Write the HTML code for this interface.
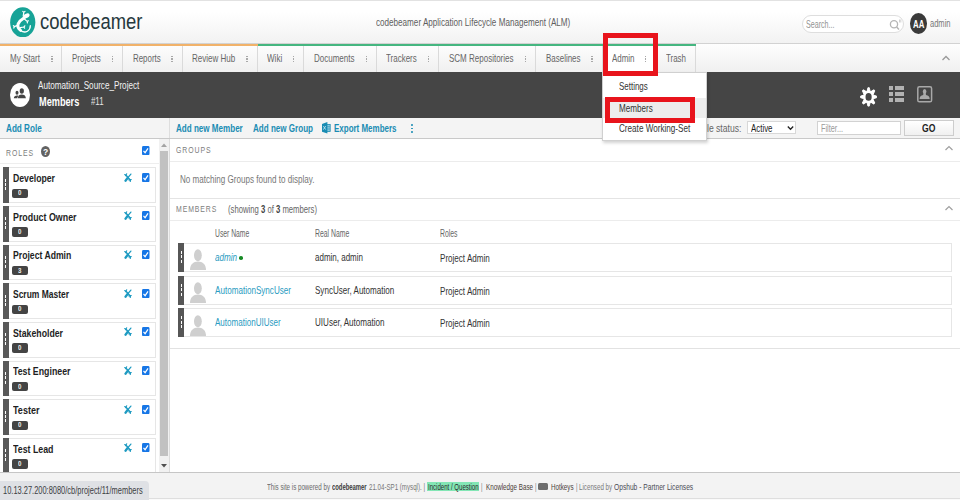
<!DOCTYPE html>
<html><head><meta charset="utf-8"><style>
html,body{margin:0;padding:0;width:960px;height:500px;overflow:hidden;background:#fff;}
body{position:relative;font-family:"Liberation Sans",sans-serif;}
body>div,body>svg{position:absolute;}
.t{white-space:nowrap;line-height:1;transform-origin:0 50%;}
.t b{font-weight:bold;}
</style></head><body>
<div style="left:0px;top:0px;width:960px;height:43px;background:linear-gradient(#fff 0,#fff 12px,#f2f2f2 43px);"></div>
<div style="left:0px;top:0px;width:960px;height:1px;background:#e2e2e2;"></div>
<div style="left:0px;top:43px;width:960px;height:1px;background:#d2d2d2;"></div>
<svg style="position:absolute;left:10px;top:6.5px" width="25.5" height="30.5" viewBox="0 0 25.5 30.5">
<ellipse cx="12.75" cy="15.25" rx="12.6" ry="15.1" fill="#17a397"/>
<g fill="#fff" stroke="#fff" stroke-linecap="round" stroke-linejoin="round">
<ellipse cx="16.4" cy="8.9" rx="3.4" ry="2.1" transform="rotate(-28 16.4 8.9)" stroke="none"/>
<path d="M14.2 10.8 C12 12.2 9.4 14 8.2 16.8 C7.4 19.2 8.2 21.6 10.6 23.4" fill="none" stroke-width="3"/>
<path d="M10.6 23.4 C12.6 25 15.2 25.4 17.4 24.2 C19.4 23 20.4 21 20.3 18.6" fill="none" stroke-width="1.3"/>
<path d="M13.2 9.2 L13.8 5.4 L12.8 4.4 M13.8 5.4 L15 4.4" fill="none" stroke-width="1.2"/>
<path d="M14.4 12 L17.2 14.4 L18.4 13.8 M17.2 14.4 L17.4 15.8" fill="none" stroke-width="1.2"/>
<path d="M8 18.2 L4.4 19.6 L3.4 18.6 M4.4 19.6 L3.8 21" fill="none" stroke-width="1.3"/>
<path d="M10.4 20.6 L13.8 20 L14.8 18.8 M13.8 20 L14.6 21.2" fill="none" stroke-width="1.2"/>
</g></svg>
<div class="t" style="left:40.00px;top:10.78px;font-size:22px;color:#26383d;transform:scaleX(0.8381);">codebeamer</div>
<div class="t" style="left:375.70px;top:17.29px;font-size:11px;color:#5e5e5e;transform:scaleX(0.7373);">codebeamer Application Lifecycle Management (ALM)</div>
<div style="left:802px;top:15px;width:101.75px;height:17.75px;border:1px solid #dedede;border-radius:9px;background:#fff;box-sizing:border-box;"></div>
<div class="t" style="left:805.80px;top:19.09px;font-size:11px;color:#939393;transform:scaleX(0.6474);">Search...</div>
<svg style="position:absolute;left:889px;top:18px" width="13" height="13" viewBox="0 0 13 13"><circle cx="5" cy="6.3" r="3.6" fill="none" stroke="#b5b5b5" stroke-width="1.3"/><path d="M7.6 9 L10 11.5" stroke="#b5b5b5" stroke-width="1.5"/><path d="M10.5 1.5v3M11.8 1.5v3" stroke="#c5c5c5" stroke-width=".8"/></svg>
<div style="left:909.5px;top:13px;width:17.5px;height:21.3px;background:#3a3a3a;border-radius:50%;"></div>
<div class="t" style="left:912.50px;top:18.99px;font-size:11px;color:#fff;font-weight:bold;transform:scaleX(0.7112);">AA</div>
<div class="t" style="left:929.80px;top:18.19px;font-size:11px;color:#777;transform:scaleX(0.6842);">admin</div>
<div style="left:0px;top:44px;width:960px;height:28px;background:linear-gradient(#fefefe,#f0f0f0);"></div>
<div style="left:0px;top:44px;width:257.5px;height:2px;background:#f1b26a;"></div>
<div style="left:257.5px;top:44px;width:438.3px;height:2px;background:#45b680;"></div>
<div style="left:602px;top:46px;width:55px;height:26px;background:#fff;"></div>
<div style="left:61px;top:46px;width:1px;height:26px;background:#dadada;"></div>
<div style="left:121.7px;top:46px;width:1px;height:26px;background:#dadada;"></div>
<div style="left:182px;top:46px;width:1px;height:26px;background:#dadada;"></div>
<div style="left:257px;top:46px;width:1px;height:26px;background:#dadada;"></div>
<div style="left:303px;top:46px;width:1px;height:26px;background:#dadada;"></div>
<div style="left:376px;top:46px;width:1px;height:26px;background:#dadada;"></div>
<div style="left:437.7px;top:46px;width:1px;height:26px;background:#dadada;"></div>
<div style="left:535px;top:46px;width:1px;height:26px;background:#dadada;"></div>
<div style="left:601.5px;top:46px;width:1px;height:26px;background:#dadada;"></div>
<div style="left:656.5px;top:46px;width:1px;height:26px;background:#dadada;"></div>
<div style="left:695.2px;top:46px;width:1px;height:26px;background:#dadada;"></div>
<div class="t" style="left:10.00px;top:53.09px;font-size:11px;color:#666;transform:scaleX(0.7326);">My Start</div>
<div style="left:51.3px;top:55.6px;width:1.4px;height:1.4px;background:#a9a9a9;"></div>
<div style="left:51.3px;top:58.3px;width:1.4px;height:1.4px;background:#a9a9a9;"></div>
<div style="left:51.3px;top:61px;width:1.4px;height:1.4px;background:#a9a9a9;"></div>
<div class="t" style="left:71.75px;top:53.09px;font-size:11px;color:#666;transform:scaleX(0.7235);">Projects</div>
<div style="left:111.8px;top:55.6px;width:1.4px;height:1.4px;background:#a9a9a9;"></div>
<div style="left:111.8px;top:58.3px;width:1.4px;height:1.4px;background:#a9a9a9;"></div>
<div style="left:111.8px;top:61px;width:1.4px;height:1.4px;background:#a9a9a9;"></div>
<div class="t" style="left:132.50px;top:53.09px;font-size:11px;color:#666;transform:scaleX(0.7192);">Reports</div>
<div style="left:171.3px;top:55.6px;width:1.4px;height:1.4px;background:#a9a9a9;"></div>
<div style="left:171.3px;top:58.3px;width:1.4px;height:1.4px;background:#a9a9a9;"></div>
<div style="left:171.3px;top:61px;width:1.4px;height:1.4px;background:#a9a9a9;"></div>
<div class="t" style="left:191.75px;top:53.09px;font-size:11px;color:#666;transform:scaleX(0.7293);">Review Hub</div>
<div style="left:246.3px;top:55.6px;width:1.4px;height:1.4px;background:#a9a9a9;"></div>
<div style="left:246.3px;top:58.3px;width:1.4px;height:1.4px;background:#a9a9a9;"></div>
<div style="left:246.3px;top:61px;width:1.4px;height:1.4px;background:#a9a9a9;"></div>
<div class="t" style="left:266.75px;top:53.09px;font-size:11px;color:#666;transform:scaleX(0.7342);">Wiki</div>
<div style="left:292.55px;top:55.6px;width:1.4px;height:1.4px;background:#a9a9a9;"></div>
<div style="left:292.55px;top:58.3px;width:1.4px;height:1.4px;background:#a9a9a9;"></div>
<div style="left:292.55px;top:61px;width:1.4px;height:1.4px;background:#a9a9a9;"></div>
<div class="t" style="left:313.75px;top:53.09px;font-size:11px;color:#666;transform:scaleX(0.7280);">Documents</div>
<div style="left:365.55px;top:55.6px;width:1.4px;height:1.4px;background:#a9a9a9;"></div>
<div style="left:365.55px;top:58.3px;width:1.4px;height:1.4px;background:#a9a9a9;"></div>
<div style="left:365.55px;top:61px;width:1.4px;height:1.4px;background:#a9a9a9;"></div>
<div class="t" style="left:386.25px;top:53.09px;font-size:11px;color:#666;transform:scaleX(0.7257);">Trackers</div>
<div style="left:427.55px;top:55.6px;width:1.4px;height:1.4px;background:#a9a9a9;"></div>
<div style="left:427.55px;top:58.3px;width:1.4px;height:1.4px;background:#a9a9a9;"></div>
<div style="left:427.55px;top:61px;width:1.4px;height:1.4px;background:#a9a9a9;"></div>
<div class="t" style="left:448.75px;top:53.09px;font-size:11px;color:#666;transform:scaleX(0.7276);">SCM Repositories</div>
<div style="left:524.8px;top:55.6px;width:1.4px;height:1.4px;background:#a9a9a9;"></div>
<div style="left:524.8px;top:58.3px;width:1.4px;height:1.4px;background:#a9a9a9;"></div>
<div style="left:524.8px;top:61px;width:1.4px;height:1.4px;background:#a9a9a9;"></div>
<div class="t" style="left:545.50px;top:53.09px;font-size:11px;color:#666;transform:scaleX(0.7233);">Baselines</div>
<div style="left:591.3px;top:55.6px;width:1.4px;height:1.4px;background:#a9a9a9;"></div>
<div style="left:591.3px;top:58.3px;width:1.4px;height:1.4px;background:#a9a9a9;"></div>
<div style="left:591.3px;top:61px;width:1.4px;height:1.4px;background:#a9a9a9;"></div>
<div class="t" style="left:611.75px;top:53.09px;font-size:11px;color:#666;transform:scaleX(0.7216);">Admin</div>
<div style="left:645.05px;top:55.6px;width:1.4px;height:1.4px;background:#a9a9a9;"></div>
<div style="left:645.05px;top:58.3px;width:1.4px;height:1.4px;background:#a9a9a9;"></div>
<div style="left:645.05px;top:61px;width:1.4px;height:1.4px;background:#a9a9a9;"></div>
<div class="t" style="left:666.25px;top:53.09px;font-size:11px;color:#666;transform:scaleX(0.7217);">Trash</div>
<svg style="position:absolute;left:941px;top:54px" width="10" height="8" viewBox="0 0 10 8"><path d="M1.5 6 L5 2.5 L8.5 6" fill="none" stroke="#9a9a9a" stroke-width="1.3"/></svg>
<div style="left:0px;top:72px;width:960px;height:45.5px;background:#454545;"></div>
<div style="left:9.9px;top:82.8px;width:20px;height:24.1px;background:#fff;border-radius:50%;"></div>
<svg style="position:absolute;left:13px;top:88px" width="14" height="11" viewBox="0 0 14 11"><g fill="#454545">
<ellipse cx="8.8" cy="3" rx="2.1" ry="2.8"/><path d="M4.8 10.2 C5 7.6 6.6 6.6 8.8 6.6 C11 6.6 12.6 7.6 12.9 10.2Z"/>
<ellipse cx="4" cy="4.8" rx="1.5" ry="2"/><path d="M0.8 10.2 C1 8.2 2.2 7.4 4 7.4 C4.6 7.4 5 7.5 5.4 7.7 C4.7 8.4 4.4 9.2 4.3 10.2Z"/></g></svg>
<div class="t" style="left:38.10px;top:79.69px;font-size:11px;color:#f2f2f2;transform:scaleX(0.7396);">Automation_Source_Project</div>
<div class="t" style="left:38.50px;top:95.54px;font-size:12px;color:#fff;font-weight:bold;transform:scaleX(0.7649);">Members</div>
<div class="t" style="left:90.60px;top:96.39px;font-size:11px;color:#e6e6e6;transform:scaleX(0.7128);">#11</div>
<svg style="position:absolute;left:860px;top:86.9px" width="17.2" height="19.8" viewBox="-10 -10 20 20" preserveAspectRatio="none"><g fill="#fff" stroke="#fff" stroke-width="1" stroke-linejoin="round"><circle r="6.5" stroke="none"/><path d="M-1.7 -6 L-0.8 -9.3 L0.8 -9.3 L1.7 -6Z" transform="rotate(0)"/><path d="M-1.7 -6 L-0.8 -9.3 L0.8 -9.3 L1.7 -6Z" transform="rotate(45)"/><path d="M-1.7 -6 L-0.8 -9.3 L0.8 -9.3 L1.7 -6Z" transform="rotate(90)"/><path d="M-1.7 -6 L-0.8 -9.3 L0.8 -9.3 L1.7 -6Z" transform="rotate(135)"/><path d="M-1.7 -6 L-0.8 -9.3 L0.8 -9.3 L1.7 -6Z" transform="rotate(180)"/><path d="M-1.7 -6 L-0.8 -9.3 L0.8 -9.3 L1.7 -6Z" transform="rotate(225)"/><path d="M-1.7 -6 L-0.8 -9.3 L0.8 -9.3 L1.7 -6Z" transform="rotate(270)"/><path d="M-1.7 -6 L-0.8 -9.3 L0.8 -9.3 L1.7 -6Z" transform="rotate(315)"/></g><ellipse rx="3.6" ry="3.9" fill="#454545"/></svg>
<div style="left:888.9px;top:86px;width:4.2px;height:4.2px;background:#b2b2b2;"></div>
<div style="left:895px;top:86px;width:9.2px;height:4.2px;background:#b2b2b2;"></div>
<div style="left:888.9px;top:91.9px;width:4.2px;height:4.2px;background:#b2b2b2;"></div>
<div style="left:895px;top:91.9px;width:9.2px;height:4.2px;background:#b2b2b2;"></div>
<div style="left:888.9px;top:97.9px;width:4.2px;height:4.2px;background:#b2b2b2;"></div>
<div style="left:895px;top:97.9px;width:9.2px;height:4.2px;background:#b2b2b2;"></div>
<svg style="position:absolute;left:917.3px;top:86px" width="15.4" height="16.6" viewBox="0 0 15.4 16.6"><rect x=".8" y=".8" width="13.8" height="15" rx="1.6" fill="none" stroke="#a9a9a9" stroke-width="1.5"/>
<ellipse cx="7.6" cy="5.6" rx="1.8" ry="2.6" fill="#a9a9a9"/><path d="M6.4 7.6 L6.2 9 C3.8 9.4 2.6 10.8 2.6 13.1 L12.7 13.1 C12.7 10.8 11.4 9.4 9 9 L8.8 7.6Z" fill="#a9a9a9"/></svg>
<div style="left:0px;top:117.5px;width:960px;height:21px;background:#f4f4f4;"></div>
<div style="left:0px;top:138px;width:960px;height:1px;background:#c9c9c9;"></div>
<div style="left:169px;top:117.5px;width:1px;height:20.5px;background:#dedede;"></div>
<div class="t" style="left:6.25px;top:123.39px;font-size:11px;color:#1a8cb3;font-weight:bold;transform:scaleX(0.7405);">Add Role</div>
<div class="t" style="left:175.75px;top:123.39px;font-size:11px;color:#1a8cb3;font-weight:bold;transform:scaleX(0.7330);">Add new Member</div>
<div class="t" style="left:252.50px;top:123.39px;font-size:11px;color:#1a8cb3;font-weight:bold;transform:scaleX(0.7328);">Add new Group</div>
<svg style="position:absolute;left:322.3px;top:122.2px" width="8.6" height="11.6" viewBox="0 0 8.6 11.6"><rect x="4.6" y="2.4" width="3.6" height="7" fill="#8fcbe0" stroke="#1a8cb3" stroke-width=".8"/><path d="M5.2 4.7h2.6M5.2 7h2.6" stroke="#1a8cb3" stroke-width=".6"/><path d="M0 1.9 L5.4 0 L5.4 11.6 L0 9.7Z" fill="#1a8cb3"/><path d="M1.4 4.1 L3.7 7.6 M3.7 4.1 L1.4 7.6" stroke="#bfe3ef" stroke-width=".9"/></svg>
<div class="t" style="left:333.75px;top:123.39px;font-size:11px;color:#1a8cb3;font-weight:bold;transform:scaleX(0.7251);">Export Members</div>
<div style="left:410.9px;top:123.8px;width:1.8px;height:1.8px;background:#1a8cb3;border-radius:50%;"></div>
<div style="left:410.9px;top:127.6px;width:1.8px;height:1.8px;background:#1a8cb3;border-radius:50%;"></div>
<div style="left:410.9px;top:131.4px;width:1.8px;height:1.8px;background:#1a8cb3;border-radius:50%;"></div>
<div class="t" style="left:696.30px;top:122.59px;font-size:11px;color:#666;transform:scaleX(0.7816);">Role status:</div>
<div style="left:747.4px;top:121.3px;width:48.2px;height:13.2px;background:#fff;border:1px solid #d8d8d8;box-sizing:border-box;"></div>
<div class="t" style="left:750.50px;top:122.69px;font-size:11px;color:#222;transform:scaleX(0.7177);">Active</div>
<svg style="position:absolute;left:786.5px;top:125px" width="7" height="6" viewBox="0 0 7 6"><path d="M.8 1.5 L3.5 4.3 L6.2 1.5" fill="none" stroke="#222" stroke-width="1.3"/></svg>
<div style="left:817.4px;top:121.2px;width:84.1px;height:14.1px;background:#fff;border:1px solid #d2d2d2;box-sizing:border-box;"></div>
<div class="t" style="left:820.80px;top:122.69px;font-size:11px;color:#9a9a9a;transform:scaleX(0.6665);">Filter...</div>
<div style="left:904px;top:120.4px;width:49.5px;height:15.5px;background:linear-gradient(#fff,#f0f0f0);border:1px solid #cdcdcd;box-sizing:border-box;"></div>
<div class="t" style="left:921.80px;top:123.09px;font-size:11px;color:#222;font-weight:bold;transform:scaleX(0.7831);">GO</div>
<div style="left:0px;top:139px;width:159px;height:333px;background:#fff;"></div>
<div class="t" style="left:6.25px;top:148.88px;font-size:9px;color:#7d7d7d;letter-spacing:1.2px;transform:scaleX(0.7669);">ROLES</div>
<div style="left:40.6px;top:145.9px;width:9.7px;height:11.6px;background:#626262;border-radius:50%;"></div>
<div class="t" style="left:42.90px;top:147.58px;font-size:9px;color:#fff;font-weight:bold;transform:scaleX(0.9458);">?</div>
<svg style="position:absolute;left:142px;top:146px" width="7.5" height="9.2" viewBox="0 0 7.5 9.2"><rect width="7.5" height="9.2" rx="1.4" fill="#1676e6"/><path d="M1.5 4.8 L3.1 6.7 L6 2.3" fill="none" stroke="#fff" stroke-width="1.2"/></svg>
<div style="left:0px;top:163px;width:158.5px;height:1.2px;background:#eeeeee;"></div>
<div style="left:3px;top:167.4px;width:152.5px;height:35.6px;border:1px solid #e6e6e6;box-sizing:border-box;background:#fff;"></div>
<div style="left:3px;top:167.4px;width:5.6px;height:35.6px;background:#595959;"></div>
<div style="left:5px;top:178.6px;width:1.4px;height:3.1px;background:#fff;"></div>
<div style="left:5px;top:183.0px;width:1.4px;height:3.1px;background:#fff;"></div>
<div style="left:5px;top:187.4px;width:1.4px;height:3.1px;background:#fff;"></div>
<div class="t" style="left:12.50px;top:172.97px;font-size:11.5px;color:#1e1e1e;font-weight:bold;transform:scaleX(0.7553);">Developer</div>
<div style="left:12px;top:188.6px;width:15.8px;height:9.4px;background:#444;border-radius:2px;"></div>
<div class="t" style="left:18.40px;top:190.40px;font-size:6.5px;color:#eee;font-weight:bold;transform:scaleX(0.9405);">0</div>
<svg style="position:absolute;left:124.2px;top:172.60px" width="8.2" height="9" viewBox="0 0 8.2 9"><g stroke="#1f9bc2" fill="none" stroke-linecap="round"><path d="M6.9 1.1 L3.9 4.6" stroke-width="1.3"/><path d="M3.8 4.8 L1.5 7.7" stroke-width="2.3"/><path d="M1.8 2 L6.4 7.2" stroke-width="1.5"/><path d="M0.7 1.5 L1.7 2.6 L2.7 0.7" stroke-width="1.1"/><path d="M4.9 6.9 L7.3 6.5 M6.3 8.4 L6.5 6.7" stroke-width="1.2"/></g></svg>
<svg style="position:absolute;left:142px;top:172.6px" width="7.5" height="9.2" viewBox="0 0 7.5 9.2"><rect width="7.5" height="9.2" rx="1.4" fill="#1676e6"/><path d="M1.5 4.8 L3.1 6.7 L6 2.3" fill="none" stroke="#fff" stroke-width="1.2"/></svg>
<div style="left:3px;top:206.06px;width:152.5px;height:35.6px;border:1px solid #e6e6e6;box-sizing:border-box;background:#fff;"></div>
<div style="left:3px;top:206.06px;width:5.6px;height:35.6px;background:#595959;"></div>
<div style="left:5px;top:217.26px;width:1.4px;height:3.1px;background:#fff;"></div>
<div style="left:5px;top:221.66px;width:1.4px;height:3.1px;background:#fff;"></div>
<div style="left:5px;top:226.06px;width:1.4px;height:3.1px;background:#fff;"></div>
<div class="t" style="left:12.50px;top:211.63px;font-size:11.5px;color:#1e1e1e;font-weight:bold;transform:scaleX(0.7704);">Product Owner</div>
<div style="left:12px;top:227.26px;width:15.8px;height:9.4px;background:#444;border-radius:2px;"></div>
<div class="t" style="left:18.40px;top:229.06px;font-size:6.5px;color:#eee;font-weight:bold;transform:scaleX(0.9405);">0</div>
<svg style="position:absolute;left:124.2px;top:211.26px" width="8.2" height="9" viewBox="0 0 8.2 9"><g stroke="#1f9bc2" fill="none" stroke-linecap="round"><path d="M6.9 1.1 L3.9 4.6" stroke-width="1.3"/><path d="M3.8 4.8 L1.5 7.7" stroke-width="2.3"/><path d="M1.8 2 L6.4 7.2" stroke-width="1.5"/><path d="M0.7 1.5 L1.7 2.6 L2.7 0.7" stroke-width="1.1"/><path d="M4.9 6.9 L7.3 6.5 M6.3 8.4 L6.5 6.7" stroke-width="1.2"/></g></svg>
<svg style="position:absolute;left:142px;top:211.26px" width="7.5" height="9.2" viewBox="0 0 7.5 9.2"><rect width="7.5" height="9.2" rx="1.4" fill="#1676e6"/><path d="M1.5 4.8 L3.1 6.7 L6 2.3" fill="none" stroke="#fff" stroke-width="1.2"/></svg>
<div style="left:3px;top:244.72px;width:152.5px;height:35.6px;border:1px solid #e6e6e6;box-sizing:border-box;background:#fff;"></div>
<div style="left:3px;top:244.72px;width:5.6px;height:35.6px;background:#595959;"></div>
<div style="left:5px;top:255.92px;width:1.4px;height:3.1px;background:#fff;"></div>
<div style="left:5px;top:260.32px;width:1.4px;height:3.1px;background:#fff;"></div>
<div style="left:5px;top:264.72px;width:1.4px;height:3.1px;background:#fff;"></div>
<div class="t" style="left:12.50px;top:250.29px;font-size:11.5px;color:#1e1e1e;font-weight:bold;transform:scaleX(0.7520);">Project Admin</div>
<div style="left:12px;top:265.92px;width:15.8px;height:9.4px;background:#444;border-radius:2px;"></div>
<div class="t" style="left:18.40px;top:267.72px;font-size:6.5px;color:#eee;font-weight:bold;transform:scaleX(0.9405);">3</div>
<svg style="position:absolute;left:124.2px;top:249.92px" width="8.2" height="9" viewBox="0 0 8.2 9"><g stroke="#1f9bc2" fill="none" stroke-linecap="round"><path d="M6.9 1.1 L3.9 4.6" stroke-width="1.3"/><path d="M3.8 4.8 L1.5 7.7" stroke-width="2.3"/><path d="M1.8 2 L6.4 7.2" stroke-width="1.5"/><path d="M0.7 1.5 L1.7 2.6 L2.7 0.7" stroke-width="1.1"/><path d="M4.9 6.9 L7.3 6.5 M6.3 8.4 L6.5 6.7" stroke-width="1.2"/></g></svg>
<svg style="position:absolute;left:142px;top:249.92px" width="7.5" height="9.2" viewBox="0 0 7.5 9.2"><rect width="7.5" height="9.2" rx="1.4" fill="#1676e6"/><path d="M1.5 4.8 L3.1 6.7 L6 2.3" fill="none" stroke="#fff" stroke-width="1.2"/></svg>
<div style="left:3px;top:283.38px;width:152.5px;height:35.6px;border:1px solid #e6e6e6;box-sizing:border-box;background:#fff;"></div>
<div style="left:3px;top:283.38px;width:5.6px;height:35.6px;background:#595959;"></div>
<div style="left:5px;top:294.58px;width:1.4px;height:3.1px;background:#fff;"></div>
<div style="left:5px;top:298.98px;width:1.4px;height:3.1px;background:#fff;"></div>
<div style="left:5px;top:303.38px;width:1.4px;height:3.1px;background:#fff;"></div>
<div class="t" style="left:12.50px;top:288.95px;font-size:11.5px;color:#1e1e1e;font-weight:bold;transform:scaleX(0.7363);">Scrum Master</div>
<div style="left:12px;top:304.58px;width:15.8px;height:9.4px;background:#444;border-radius:2px;"></div>
<div class="t" style="left:18.40px;top:306.38px;font-size:6.5px;color:#eee;font-weight:bold;transform:scaleX(0.9405);">0</div>
<svg style="position:absolute;left:124.2px;top:288.58px" width="8.2" height="9" viewBox="0 0 8.2 9"><g stroke="#1f9bc2" fill="none" stroke-linecap="round"><path d="M6.9 1.1 L3.9 4.6" stroke-width="1.3"/><path d="M3.8 4.8 L1.5 7.7" stroke-width="2.3"/><path d="M1.8 2 L6.4 7.2" stroke-width="1.5"/><path d="M0.7 1.5 L1.7 2.6 L2.7 0.7" stroke-width="1.1"/><path d="M4.9 6.9 L7.3 6.5 M6.3 8.4 L6.5 6.7" stroke-width="1.2"/></g></svg>
<svg style="position:absolute;left:142px;top:288.58px" width="7.5" height="9.2" viewBox="0 0 7.5 9.2"><rect width="7.5" height="9.2" rx="1.4" fill="#1676e6"/><path d="M1.5 4.8 L3.1 6.7 L6 2.3" fill="none" stroke="#fff" stroke-width="1.2"/></svg>
<div style="left:3px;top:322.03999999999996px;width:152.5px;height:35.6px;border:1px solid #e6e6e6;box-sizing:border-box;background:#fff;"></div>
<div style="left:3px;top:322.03999999999996px;width:5.6px;height:35.6px;background:#595959;"></div>
<div style="left:5px;top:333.23999999999995px;width:1.4px;height:3.1px;background:#fff;"></div>
<div style="left:5px;top:337.64px;width:1.4px;height:3.1px;background:#fff;"></div>
<div style="left:5px;top:342.03999999999996px;width:1.4px;height:3.1px;background:#fff;"></div>
<div class="t" style="left:12.50px;top:327.61px;font-size:11.5px;color:#1e1e1e;font-weight:bold;transform:scaleX(0.7595);">Stakeholder</div>
<div style="left:12px;top:343.23999999999995px;width:15.8px;height:9.4px;background:#444;border-radius:2px;"></div>
<div class="t" style="left:18.40px;top:345.04px;font-size:6.5px;color:#eee;font-weight:bold;transform:scaleX(0.9405);">0</div>
<svg style="position:absolute;left:124.2px;top:327.24px" width="8.2" height="9" viewBox="0 0 8.2 9"><g stroke="#1f9bc2" fill="none" stroke-linecap="round"><path d="M6.9 1.1 L3.9 4.6" stroke-width="1.3"/><path d="M3.8 4.8 L1.5 7.7" stroke-width="2.3"/><path d="M1.8 2 L6.4 7.2" stroke-width="1.5"/><path d="M0.7 1.5 L1.7 2.6 L2.7 0.7" stroke-width="1.1"/><path d="M4.9 6.9 L7.3 6.5 M6.3 8.4 L6.5 6.7" stroke-width="1.2"/></g></svg>
<svg style="position:absolute;left:142px;top:327.24px" width="7.5" height="9.2" viewBox="0 0 7.5 9.2"><rect width="7.5" height="9.2" rx="1.4" fill="#1676e6"/><path d="M1.5 4.8 L3.1 6.7 L6 2.3" fill="none" stroke="#fff" stroke-width="1.2"/></svg>
<div style="left:3px;top:360.7px;width:152.5px;height:35.6px;border:1px solid #e6e6e6;box-sizing:border-box;background:#fff;"></div>
<div style="left:3px;top:360.7px;width:5.6px;height:35.6px;background:#595959;"></div>
<div style="left:5px;top:371.9px;width:1.4px;height:3.1px;background:#fff;"></div>
<div style="left:5px;top:376.3px;width:1.4px;height:3.1px;background:#fff;"></div>
<div style="left:5px;top:380.7px;width:1.4px;height:3.1px;background:#fff;"></div>
<div class="t" style="left:12.50px;top:366.27px;font-size:11.5px;color:#1e1e1e;font-weight:bold;transform:scaleX(0.7647);">Test Engineer</div>
<div style="left:12px;top:381.9px;width:15.8px;height:9.4px;background:#444;border-radius:2px;"></div>
<div class="t" style="left:18.40px;top:383.70px;font-size:6.5px;color:#eee;font-weight:bold;transform:scaleX(0.9405);">0</div>
<svg style="position:absolute;left:124.2px;top:365.90px" width="8.2" height="9" viewBox="0 0 8.2 9"><g stroke="#1f9bc2" fill="none" stroke-linecap="round"><path d="M6.9 1.1 L3.9 4.6" stroke-width="1.3"/><path d="M3.8 4.8 L1.5 7.7" stroke-width="2.3"/><path d="M1.8 2 L6.4 7.2" stroke-width="1.5"/><path d="M0.7 1.5 L1.7 2.6 L2.7 0.7" stroke-width="1.1"/><path d="M4.9 6.9 L7.3 6.5 M6.3 8.4 L6.5 6.7" stroke-width="1.2"/></g></svg>
<svg style="position:absolute;left:142px;top:365.9px" width="7.5" height="9.2" viewBox="0 0 7.5 9.2"><rect width="7.5" height="9.2" rx="1.4" fill="#1676e6"/><path d="M1.5 4.8 L3.1 6.7 L6 2.3" fill="none" stroke="#fff" stroke-width="1.2"/></svg>
<div style="left:3px;top:399.36px;width:152.5px;height:35.6px;border:1px solid #e6e6e6;box-sizing:border-box;background:#fff;"></div>
<div style="left:3px;top:399.36px;width:5.6px;height:35.6px;background:#595959;"></div>
<div style="left:5px;top:410.56px;width:1.4px;height:3.1px;background:#fff;"></div>
<div style="left:5px;top:414.96000000000004px;width:1.4px;height:3.1px;background:#fff;"></div>
<div style="left:5px;top:419.36px;width:1.4px;height:3.1px;background:#fff;"></div>
<div class="t" style="left:12.50px;top:404.93px;font-size:11.5px;color:#1e1e1e;font-weight:bold;transform:scaleX(0.7872);">Tester</div>
<div style="left:12px;top:420.56px;width:15.8px;height:9.4px;background:#444;border-radius:2px;"></div>
<div class="t" style="left:18.40px;top:422.36px;font-size:6.5px;color:#eee;font-weight:bold;transform:scaleX(0.9405);">0</div>
<svg style="position:absolute;left:124.2px;top:404.56px" width="8.2" height="9" viewBox="0 0 8.2 9"><g stroke="#1f9bc2" fill="none" stroke-linecap="round"><path d="M6.9 1.1 L3.9 4.6" stroke-width="1.3"/><path d="M3.8 4.8 L1.5 7.7" stroke-width="2.3"/><path d="M1.8 2 L6.4 7.2" stroke-width="1.5"/><path d="M0.7 1.5 L1.7 2.6 L2.7 0.7" stroke-width="1.1"/><path d="M4.9 6.9 L7.3 6.5 M6.3 8.4 L6.5 6.7" stroke-width="1.2"/></g></svg>
<svg style="position:absolute;left:142px;top:404.56px" width="7.5" height="9.2" viewBox="0 0 7.5 9.2"><rect width="7.5" height="9.2" rx="1.4" fill="#1676e6"/><path d="M1.5 4.8 L3.1 6.7 L6 2.3" fill="none" stroke="#fff" stroke-width="1.2"/></svg>
<div style="left:3px;top:438.02px;width:152.5px;height:35.6px;border:1px solid #e6e6e6;box-sizing:border-box;background:#fff;"></div>
<div style="left:3px;top:438.02px;width:5.6px;height:35.6px;background:#595959;"></div>
<div style="left:5px;top:449.21999999999997px;width:1.4px;height:3.1px;background:#fff;"></div>
<div style="left:5px;top:453.62px;width:1.4px;height:3.1px;background:#fff;"></div>
<div style="left:5px;top:458.02px;width:1.4px;height:3.1px;background:#fff;"></div>
<div class="t" style="left:12.50px;top:443.59px;font-size:11.5px;color:#1e1e1e;font-weight:bold;transform:scaleX(0.7666);">Test Lead</div>
<div style="left:12px;top:459.21999999999997px;width:15.8px;height:9.4px;background:#444;border-radius:2px;"></div>
<div class="t" style="left:18.40px;top:461.02px;font-size:6.5px;color:#eee;font-weight:bold;transform:scaleX(0.9405);">0</div>
<svg style="position:absolute;left:124.2px;top:443.22px" width="8.2" height="9" viewBox="0 0 8.2 9"><g stroke="#1f9bc2" fill="none" stroke-linecap="round"><path d="M6.9 1.1 L3.9 4.6" stroke-width="1.3"/><path d="M3.8 4.8 L1.5 7.7" stroke-width="2.3"/><path d="M1.8 2 L6.4 7.2" stroke-width="1.5"/><path d="M0.7 1.5 L1.7 2.6 L2.7 0.7" stroke-width="1.1"/><path d="M4.9 6.9 L7.3 6.5 M6.3 8.4 L6.5 6.7" stroke-width="1.2"/></g></svg>
<svg style="position:absolute;left:142px;top:443.22px" width="7.5" height="9.2" viewBox="0 0 7.5 9.2"><rect width="7.5" height="9.2" rx="1.4" fill="#1676e6"/><path d="M1.5 4.8 L3.1 6.7 L6 2.3" fill="none" stroke="#fff" stroke-width="1.2"/></svg>
<div style="left:158.5px;top:139px;width:10.5px;height:333px;background:#f1f1f1;"></div>
<div style="left:159.8px;top:151.2px;width:7.8px;height:305px;background:#c1c1c1;"></div>
<svg style="position:absolute;left:160px;top:142px" width="8" height="6" viewBox="0 0 8 6"><path d="M1 5 L4 1.5 L7 5Z" fill="#a3a3a3"/></svg>
<svg style="position:absolute;left:160px;top:462.5px" width="8" height="6" viewBox="0 0 8 6"><path d="M1 1 L4 4.5 L7 1Z" fill="#505050"/></svg>
<div style="left:169px;top:139px;width:1px;height:333px;background:#dcdcdc;"></div>
<div class="t" style="left:175.75px;top:145.58px;font-size:9px;color:#7d7d7d;letter-spacing:1.2px;transform:scaleX(0.7683);">GROUPS</div>
<svg style="position:absolute;left:944px;top:144px" width="10" height="8" viewBox="0 0 10 8"><path d="M1.5 6 L5 2.5 L8.5 6" fill="none" stroke="#a0a0a0" stroke-width="1.2"/></svg>
<div style="left:170px;top:160.5px;width:790px;height:1px;background:#ececec;"></div>
<div class="t" style="left:180.00px;top:174.29px;font-size:11px;color:#777;transform:scaleX(0.7340);">No matching Groups found to display.</div>
<div style="left:170px;top:198px;width:790px;height:1px;background:#e4e4e4;"></div>
<div class="t" style="left:175.75px;top:205.18px;font-size:9px;color:#7d7d7d;letter-spacing:1.2px;transform:scaleX(0.7643);">MEMBERS</div>
<div class="t" style="left:228px;top:204.5px;font-size:10px;color:#666;transform:scaleX(.77);">(showing <b style="color:#444">3</b> of <b style="color:#444">3</b> members)</div>
<svg style="position:absolute;left:944px;top:204px" width="10" height="8" viewBox="0 0 10 8"><path d="M1.5 6 L5 2.5 L8.5 6" fill="none" stroke="#a0a0a0" stroke-width="1.2"/></svg>
<div style="left:170px;top:219.8px;width:790px;height:1px;background:#ececec;"></div>
<div class="t" style="left:214.50px;top:228.73px;font-size:10px;color:#666;transform:scaleX(0.6773);">User Name</div>
<div class="t" style="left:315.00px;top:228.73px;font-size:10px;color:#666;transform:scaleX(0.6847);">Real Name</div>
<div class="t" style="left:439.50px;top:228.73px;font-size:10px;color:#666;transform:scaleX(0.6845);">Roles</div>
<div style="left:178.25px;top:242.5px;width:773.25px;height:29px;border:1px solid #e6e6e6;box-sizing:border-box;background:#fff;"></div>
<div style="left:178.25px;top:242.5px;width:6.2px;height:29px;background:#565656;"></div>
<div style="left:180.7px;top:250.8px;width:1.4px;height:3.1px;background:#fff;"></div>
<div style="left:180.7px;top:255.2px;width:1.4px;height:3.1px;background:#fff;"></div>
<div style="left:180.7px;top:259.6px;width:1.4px;height:3.1px;background:#fff;"></div>
<svg style="position:absolute;left:189.9px;top:249.20px" width="16" height="21" viewBox="0 0 16 21"><ellipse cx="7.9" cy="6.2" rx="3.9" ry="6" fill="#cfcfcf"/><path d="M0 21 C0 15.6 3.4 12.6 8 12.6 C12.6 12.6 16 15.6 16 21 Z" fill="#cfcfcf"/></svg>
<div class="t" style="left:214.70px;top:252.19px;font-size:11px;color:#2a9bc1;font-style:italic;transform:scaleX(0.7376);">admin</div>
<div class="t" style="left:315.00px;top:252.19px;font-size:11px;color:#333;transform:scaleX(0.7269);">admin, admin</div>
<div class="t" style="left:439.50px;top:252.79px;font-size:11px;color:#333;transform:scaleX(0.7331);">Project Admin</div>
<div style="left:178.25px;top:275.5px;width:773.25px;height:29px;border:1px solid #e6e6e6;box-sizing:border-box;background:#fff;"></div>
<div style="left:178.25px;top:275.5px;width:6.2px;height:29px;background:#565656;"></div>
<div style="left:180.7px;top:283.8px;width:1.4px;height:3.1px;background:#fff;"></div>
<div style="left:180.7px;top:288.2px;width:1.4px;height:3.1px;background:#fff;"></div>
<div style="left:180.7px;top:292.6px;width:1.4px;height:3.1px;background:#fff;"></div>
<svg style="position:absolute;left:189.9px;top:282.20px" width="16" height="21" viewBox="0 0 16 21"><ellipse cx="7.9" cy="6.2" rx="3.9" ry="6" fill="#cfcfcf"/><path d="M0 21 C0 15.6 3.4 12.6 8 12.6 C12.6 12.6 16 15.6 16 21 Z" fill="#cfcfcf"/></svg>
<div class="t" style="left:214.70px;top:285.19px;font-size:11px;color:#2a9bc1;transform:scaleX(0.7355);">AutomationSyncUser</div>
<div class="t" style="left:315.00px;top:285.19px;font-size:11px;color:#333;transform:scaleX(0.7323);">SyncUser, Automation</div>
<div class="t" style="left:439.50px;top:285.79px;font-size:11px;color:#333;transform:scaleX(0.7331);">Project Admin</div>
<div style="left:178.25px;top:307.8px;width:773.25px;height:29px;border:1px solid #e6e6e6;box-sizing:border-box;background:#fff;"></div>
<div style="left:178.25px;top:307.8px;width:6.2px;height:29px;background:#565656;"></div>
<div style="left:180.7px;top:316.1px;width:1.4px;height:3.1px;background:#fff;"></div>
<div style="left:180.7px;top:320.5px;width:1.4px;height:3.1px;background:#fff;"></div>
<div style="left:180.7px;top:324.90000000000003px;width:1.4px;height:3.1px;background:#fff;"></div>
<svg style="position:absolute;left:189.9px;top:314.50px" width="16" height="21" viewBox="0 0 16 21"><ellipse cx="7.9" cy="6.2" rx="3.9" ry="6" fill="#cfcfcf"/><path d="M0 21 C0 15.6 3.4 12.6 8 12.6 C12.6 12.6 16 15.6 16 21 Z" fill="#cfcfcf"/></svg>
<div class="t" style="left:214.70px;top:317.49px;font-size:11px;color:#2a9bc1;transform:scaleX(0.7310);">AutomationUIUser</div>
<div class="t" style="left:315.00px;top:317.49px;font-size:11px;color:#333;transform:scaleX(0.7344);">UIUser, Automation</div>
<div class="t" style="left:439.50px;top:318.09px;font-size:11px;color:#333;transform:scaleX(0.7331);">Project Admin</div>
<div style="left:239.2px;top:256.09999999999997px;width:3.6px;height:3.6px;background:#178a25;border-radius:50%;"></div>
<div style="left:170px;top:348px;width:790px;height:1px;background:#e2e2e2;"></div>
<div style="left:601.8px;top:72px;width:105.6px;height:68.8px;background:#fff;border:1px solid #d0d0d0;box-sizing:border-box;box-shadow:1px 2px 3px rgba(0,0,0,.18);"></div>
<div class="t" style="left:618.75px;top:81.49px;font-size:11px;color:#333;transform:scaleX(0.7233);">Settings</div>
<div style="left:602.8px;top:98px;width:103.6px;height:19.5px;background:#ededed;"></div>
<div class="t" style="left:618.75px;top:102.89px;font-size:11px;color:#333;transform:scaleX(0.7362);">Members</div>
<div class="t" style="left:618.75px;top:123.09px;font-size:11px;color:#333;transform:scaleX(0.7392);">Create Working-Set</div>
<div style="left:603px;top:33px;width:54.75px;height:42.5px;border:5.5px solid #e8141c;box-sizing:border-box;"></div>
<div style="left:605px;top:97px;width:90px;height:26px;border:5px solid #e8141c;box-sizing:border-box;"></div>
<div style="left:0px;top:472px;width:960px;height:28px;background:#f3f3f3;"></div>
<div style="left:0px;top:472px;width:960px;height:1px;background:#c6c6c6;"></div>
<div style="left:0px;top:498px;width:960px;height:1px;background:#dedede;"></div>
<div style="left:0px;top:499px;width:960px;height:1px;background:#fafafa;"></div>
<div class="t" style="left:267.00px;top:482.68px;font-size:9px;color:#6a6a6a;transform:scaleX(0.6882);">This site is powered by</div>
<div class="t" style="left:331.90px;top:482.68px;font-size:9px;color:#3a3a3a;font-weight:bold;transform:scaleX(0.6525);">codebeamer</div>
<div class="t" style="left:368.60px;top:482.68px;font-size:9px;color:#777;transform:scaleX(0.6840);">21.04-SP1 (mysql). |</div>
<div style="left:426.8px;top:482.4px;width:52.3px;height:8.2px;background:#83e6b5;"></div>
<div class="t" style="left:427.60px;top:482.68px;font-size:9px;color:#2a2a2a;transform:scaleX(0.6743);">Incident / Question</div>
<div class="t" style="left:481.00px;top:482.68px;font-size:9px;color:#777;transform:scaleX(0.6416);">|</div>
<div class="t" style="left:485.60px;top:482.68px;font-size:9px;color:#4a4038;transform:scaleX(0.6958);">Knowledge Base</div>
<div class="t" style="left:535.20px;top:482.68px;font-size:9px;color:#777;transform:scaleX(0.6416);">|</div>
<div style="left:538.4px;top:482.6px;width:9.7px;height:7.6px;background:#6d6d6d;border-radius:1.5px;"></div>
<div class="t" style="left:551.00px;top:482.68px;font-size:9px;color:#4a3e3a;transform:scaleX(0.6951);">Hotkeys</div>
<div class="t" style="left:576.00px;top:482.68px;font-size:9px;color:#777;transform:scaleX(0.6416);">|</div>
<div class="t" style="left:578.60px;top:482.68px;font-size:9px;color:#7a7a7a;transform:scaleX(0.6891);">Licensed by</div>
<div class="t" style="left:614.00px;top:482.68px;font-size:9px;color:#4c4c55;transform:scaleX(0.7398);">Opshub - Partner Licenses</div>
<div style="left:0px;top:481.3px;width:148.5px;height:18.7px;background:#dfe1e5;border-top-right-radius:4px;"></div>
<div class="t" style="left:3.30px;top:485.54px;font-size:10px;color:#3c4043;transform:scaleX(0.7464);">10.13.27.200:8080/cb/project/11/members</div>
</body></html>
